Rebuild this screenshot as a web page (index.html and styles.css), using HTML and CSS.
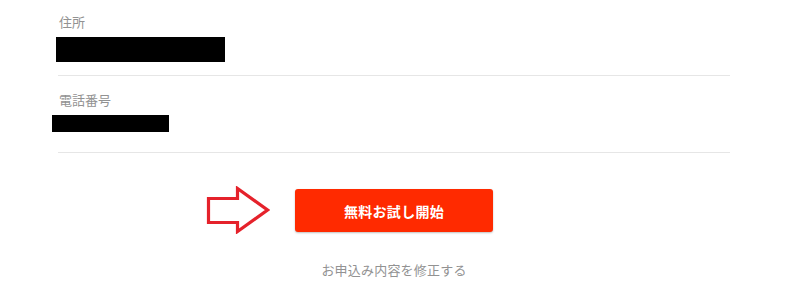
FILE: index.html
```html
<!DOCTYPE html>
<html lang="ja">
<head>
<meta charset="utf-8">
<link rel="stylesheet" href="styles.css">
</head>
<body>
<div class="form">
  <div class="field field-first">
    <div class="label">住所</div>
    <div class="redact redact-addr"></div>
  </div>
  <div class="field">
    <div class="label">電話番号</div>
    <div class="redact redact-tel"></div>
  </div>
  <div class="actions">
    <div class="btn-wrap">
      <svg class="arrow" width="64" height="48" viewBox="0 0 64 48">
        <polygon points="2.5,12.5 31.5,12.5 31.5,2.5 61.5,24 31.5,45.5 31.5,36.5 2.5,36.5" fill="#fff" stroke="#e5222b" stroke-width="3.2" stroke-linejoin="miter"/>
      </svg>
      <button class="btn">無料お試し開始</button>
    </div>
    <a class="edit-link">お申込み内容を修正する</a>
  </div>
</div>
</body>
</html>
```
FILE: styles.css
```css
html, body {
  margin: 0;
  padding: 0;
  background: #fff;
}
body {
  font-family: "Noto Sans CJK JP", "Noto Sans", sans-serif;
  width: 800px;
  height: 281px;
  overflow: hidden;
}
.form {
  margin-left: 58px;
  width: 672px;
}
.field {
  border-bottom: 1px solid #e6e6e6;
  padding-top: 15px;
  padding-bottom: 20px;
}
.field-first {
  padding-top: 13px;
  padding-bottom: 13px;
}
.label {
  font-size: 13px;
  line-height: 18px;
  color: #929292;
  padding-left: 1px;
}
.redact {
  background: #000;
}
.redact-addr {
  margin-top: 6px;
  margin-left: -2px;
  width: 169px;
  height: 25px;
}
.redact-tel {
  margin-top: 6px;
  margin-left: -6px;
  width: 117px;
  height: 17px;
}
.actions {
  display: flex;
  flex-direction: column;
  align-items: center;
  padding-top: 36px;
}
.btn-wrap {
  position: relative;
}
.arrow {
  position: absolute;
  right: calc(100% + 25px);
  top: -3px;
  display: block;
}
.btn {
  display: block;
  width: 198px;
  height: 43px;
  border: none;
  border-radius: 3px;
  background: #ff2a00;
  color: #fff;
  font-family: "Noto Sans CJK JP", sans-serif;
  font-weight: 700;
  font-size: 14px;
  letter-spacing: 0.3px;
  box-shadow: 0 1px 2px rgba(0,0,0,0.25);
  padding: 0;
}
.edit-link {
  margin-top: 29px;
  font-size: 13px;
  line-height: 18px;
  color: #929292;
  letter-spacing: 0.2px;
}
```
